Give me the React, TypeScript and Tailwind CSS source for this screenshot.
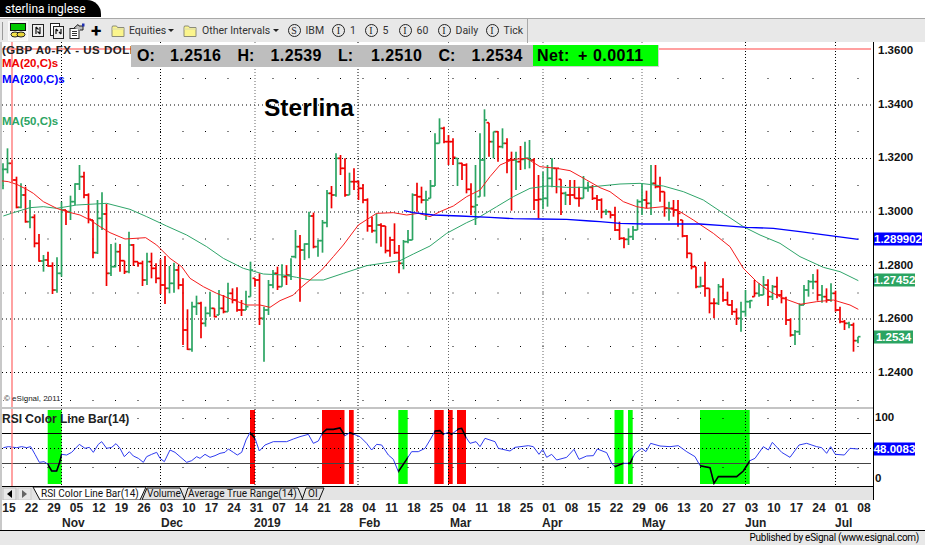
import type { ReactNode } from 'react';

// [green, high, low, close] read off the chart, in three stretches with their own y base
type Raw = [number, number, number, number];

const SEG_A: Raw[] = [
  [1,100,178,118],[1,55,130,100],[0,90,160,150],[0,140,235,232],[1,160,235,195],[0,170,278,275],[1,210,295,262],[0,253,352,340],
  [0,312,395,393],[1,375,425,390],[0,365,410,408],[0,397,492,480],[1,382,488,430],[1,215,440,240],[0,240,285,245],[1,197,270,215],
  [1,160,225,162],[1,105,180,140],[0,125,205,195],[0,190,280,268],[0,270,385,368],[1,210,372,265],[1,187,300,252],[0,222,468,430],
  [1,342,438,410],[1,338,412,365],[0,342,425,392],[0,392,432,425],[1,305,430,345],[0,342,408,395],[0,395,410,400],[0,392,468,450],
  [1,368,465,395],[0,368,445,415],[0,400,460,445],[0,388,492,465],[0,378,522,475],[1,408,490,460],[1,398,488,420],[0,408,478,465],
  [0,445,645,600],[0,538,660,658],[1,515,665,530],[1,497,555,520],[0,515,625,580],[1,530,590,550],[1,485,560,535],[0,535,562,560],
  [1,480,555,535],[0,495,550,545],[1,458,545,490],[0,475,520,510],[0,472,545,540],[0,510,558,540],[1,482,540,530],[1,395,500,420],
  [0,445,470,450],[0,430,585,565],[1,530,695,540],[1,450,555,465],[1,420,475,430],[0,410,480,470],[1,403,470,440],[0,405,465,435],
  [1,385,450,380],[1,300,385,350],[0,315,515,360],[1,340,390,342],[1,245,385,258],
];
const SEG_B: Raw[] = [
  [0,338,445,440],[1,420,470,422],[1,360,458,368],[1,270,382,280],[0,258,325,285],[1,160,290,175],[0,165,225,205],[0,175,290,285],
  [1,218,285,245],[0,205,270,245],[0,242,300,265],[0,252,310,300],[0,295,395,378],[0,350,398,392],[1,340,430,375],[0,370,440,378],
  [0,378,460,452],[0,410,470,420],[0,370,462,458],[0,435,520,490],[1,420,508,425],[1,390,430,420],[1,280,420,285],[0,248,335,290],
  [0,260,310,300],[1,272,360,300],[1,240,295,258],[1,100,258,130],[1,55,130,85],[0,80,130,125],[0,105,195,125],[0,115,195,172],
  [1,175,258,190],[0,188,240,195],[0,190,280,268],[0,250,345,320],[1,195,375,315],[1,100,290,180],[1,28,290,60],[0,68,170,125],
  [1,95,175,95],[0,95,185,140],[1,85,145,130],[0,115,220,180],[0,155,332,180],[1,155,270,185],[0,138,210,178],[1,125,208,175],
  [1,120,205,180],[0,175,330,300],[0,225,355,298],[1,215,328,295],[1,195,320,235],[1,175,262,205],[0,205,280,205],[0,238,345,280],
  [1,275,315,285],[0,240,315,285],[0,240,295,295],[0,260,320,295],[1,228,295,265],[1,245,275,262],[0,255,300,295],[0,285,330,300],
];
const SEG_C: Raw[] = [
  [0,145,205,185],[1,178,195,185],[0,185,205,195],[0,170,243,240],[0,215,270,265],[0,262,295,268],[1,235,285,260],[1,228,270,240],
  [1,148,240,155],[1,100,195,150],[0,122,175,160],[1,45,195,100],[0,45,115,110],[0,80,155,125],[0,125,200,175],[1,155,212,175],
  [0,150,200,180],[0,150,230,190],[0,210,262,258],[0,255,325,310],[0,310,358,350],[0,350,415,410],[1,380,412,408],[0,335,440,415],
  [0,415,490,460],[0,445,505,460],[1,402,465,410],[0,385,455,450],[0,425,465,465],[0,450,495,485],[0,475,525,505],[1,455,545,485],
  [1,420,500,455],[1,450,475,452],[0,390,440,430],[1,400,440,435],[1,378,435,405],[0,388,468,440],[1,405,450,410],[0,380,445,435],
  [0,420,460,445],[0,440,525,510],[0,505,560,555],[1,540,585,545],[1,460,555,465],[1,405,465,420],[1,390,440,395],[1,372,418,395],
  [0,358,452,435],[1,405,458,440],[0,415,458,450],[1,400,455,430],[0,422,485,480],[0,470,520,515],[0,510,540,520],[1,515,535,525],
  [0,518,605,572],[1,560,580,560],
];

const toBars = (seg: Raw[], base: number) =>
  seg.map(([green, hi, lo, close]) => ({ green, hi: base + hi / 3, lo: base + lo / 3, close: base + close / 3 }));

const BARS = [...toBars(SEG_A, 130), ...toBars(SEG_B, 100), ...toBars(SEG_C, 150)];

type Pt = [number, number];
const pts = (list: Pt[], ox: number, oy: number) => list.map(([a, b]) => ox + a / 3 + ',' + (oy + b / 3)).join(' ');

const MA20 = [
  pts([[0,152],[25,155],[50,163],[80,178],[100,190],[130,215],[170,235],[200,245],[240,255],[270,270],[300,290],[330,308],[375,327],[437,323],[470,345],[510,385],[545,410],[570,445],[610,470],[650,490],[700,510],[740,525],[780,525],[810,532],[840,512],[880,495],[900,475],[930,450]], 0, 130),
  pts([[65,510],[100,470],[130,435],[175,375],[230,340],[280,338],[320,345],[355,340],[390,350],[420,335],[460,318],[500,290],[540,270],[570,230],[600,195],[640,178],[680,175],[720,200],[770,205],[810,212],[860,240]], 300, 100),
  pts([[0,113],[30,125],[70,155],[110,170],[140,175],[190,170],[240,185],[280,210],[340,250],[390,290],[430,355],[470,395],[510,425],[550,445],[600,463],[650,455],[700,450],[750,465],[775,478]], 600, 150),
].join(' ');

const MA50 = [
  pts([[10,258],[40,248],[90,233],[130,230],[170,235],[230,225],[320,220],[390,238],[440,260],[500,288],[560,315],[620,350],[670,385],[730,415],[790,432],[850,435],[890,442],[930,450]], 0, 130),
  pts([[70,540],[130,520],[200,497],[300,482],[340,462],[390,438],[440,400],[500,368],[540,350],[590,320],[640,290],[690,265],[740,258],[800,262],[860,262],[900,258]], 300, 100),
  pts([[0,108],[60,102],[120,100],[190,108],[250,125],[310,150],[370,190],[430,230],[480,255],[540,280],[600,320],[670,352],[720,365],[775,392]], 600, 150),
].join(' ');

const MA200 = [
  pts([[312,332],[340,338],[400,345],[480,348],[570,352],[640,356],[720,357],[800,358],[870,363]], 300, 100),
  pts([[0,215],[60,220],[130,222],[220,222],[300,222],[370,227],[440,232],[520,235],[600,245],[690,257],[775,268]], 600, 150),
].join(' ');

const RSI = [
  pts([[10,158],[25,155],[50,158],[65,155],[80,158],[92,155],[105,178],[118,202],[132,200],[143,207],[155,228],[170,228],[178,205],[185,178],[200,180],[215,172],[238,148],[255,160],[268,157],[280,172],[295,148],[305,140],[320,160],[335,157],[348,146],[360,160],[373,185],[388,170],[400,183],[415,190],[430,202],[440,185],[455,178],[470,172],[480,190],[493,200],[510,165],[525,172],[540,185],[560,202],[575,197],[590,185],[600,190],[615,178],[630,187],[645,182],[660,175],[675,172],[685,162],[700,172],[712,180],[725,172],[738,135],[750,113],[765,130],[778,168],[795,150],[820,140],[860,140],[880,132],[900,125],[925,118],[940,145],[955,138],[968,113],[980,103],[1000,103],[1020,99],[1035,122],[1050,113],[1062,118],[1080,125],[1100,145],[1115,165],[1130,148],[1145,150],[1165,180]], 0, 395),
  pts([[10,178],[25,215],[50,178],[65,155],[85,155],[105,145],[120,120],[135,93],[150,92],[160,103],[175,97],[185,103],[205,87],[215,85],[230,115],[240,130],[258,125],[270,140],[285,115],[315,125],[325,145],[360,153],[375,142],[415,137],[430,140],[447,163],[458,148],[470,172],[485,163],[500,180],[530,172],[552,148],[567,178],[590,168],[610,167],[622,147],[650,158],[665,190]], 390, 400),
  pts([[45,215],[70,205],[90,205],[105,175],[125,160],[138,170],[152,145],[180,153],[210,155],[235,152],[260,170],[285,185],[300,212],[330,218],[342,265],[355,245],[410,245],[430,228],[450,197],[465,190],[490,155],[505,165],[517,142],[545,172],[570,187],[597,150],[620,145],[650,155],[665,158],[680,175],[692,155],[706,178],[733,180],[750,160],[775,162]], 600, 395),
].join(' ');

const BANDS: { x1: number; x2: number; color: string }[] = [
  { x1: 47.7, x2: 61.7, color: '#00ff00' },
  { x1: 250, x2: 255, color: '#ff0000' },
  { x1: 322, x2: 344.5, color: '#ff0000' },
  { x1: 349, x2: 353.7, color: '#ff0000' },
  { x1: 398.3, x2: 407.7, color: '#00ff00' },
  { x1: 434.3, x2: 443.7, color: '#ff0000' },
  { x1: 448, x2: 452.7, color: '#ff0000' },
  { x1: 457, x2: 466, color: '#ff0000' },
  { x1: 614.5, x2: 623.5, color: '#00ff00' },
  { x1: 628, x2: 632.7, color: '#00ff00' },
  { x1: 700, x2: 749.7, color: '#00ff00' },
];

const MONTH_X = [61.5, 160.5, 255, 358, 448.5, 543, 642, 745.5, 835.5];
const PRICE_Y = [105, 158.5, 212, 265.5, 319, 372.5];
const MINOR_Y = [78.5, 131.5, 185.5, 239, 293, 346.5, 400.5];

const DATES = ['15','22','29','05','12','19','26','03','10','17','24','31','07','14','21','28','04','11','18','25','04','11','18','25','01','08','15','22','29','06','13','20','27','03','10','17','24','01','08'];

const GREEN = '#2ba462';

function PriceChart() {
  return (
    <svg width={871} height={365} viewBox="2 42 871 365" className="block">
      {PRICE_Y.map((y) => (
        <line key={y} x1={2} x2={871} y1={y} y2={y} stroke="#000" strokeWidth={1} strokeDasharray="1 3" />
      ))}
      {MINOR_Y.map((y) => (
        <line key={y} x1={3} x2={871} y1={y} y2={y} stroke="#000" strokeWidth={1} strokeDasharray="1 21.5" strokeDashoffset={-22} />
      ))}
      {MONTH_X.map((x, i) => (
        <line key={x} x1={x} x2={x} y1={42} y2={407} stroke={i === 2 || i === 4 || i === 5 || i === 6 ? '#666' : '#000'} strokeWidth={1} strokeDasharray="1 2" />
      ))}
      <line x1={2} x2={871} y1={49} y2={49} stroke="#ff8080" strokeWidth={1.5} />
      {BARS.map((b, i) => {
        const x = 3 + i * 4.5;
        const color = b.green ? GREEN : '#f00000';
        const open = i > 0 ? BARS[i - 1].close : b.close;
        const openY = Math.min(b.lo, Math.max(b.hi, open));
        return (
          <g key={i} stroke={color} strokeWidth={1.7} fill="none">
            <line x1={x} x2={x} y1={b.hi} y2={b.lo} />
            <line x1={x} x2={x + 2.5} y1={b.close} y2={b.close} />
            <line x1={x - 2.5} x2={x} y1={openY} y2={openY} />
          </g>
        );
      })}
      <polyline points={MA50} fill="none" stroke="#2fa56a" strokeWidth={1} />
      <polyline points={MA20} fill="none" stroke="#f51c1c" strokeWidth={1} />
      <polyline points={MA200} fill="none" stroke="#0000ff" strokeWidth={1.3} />
      <line x1={12} x2={12} y1={42} y2={407} stroke="#ff7070" strokeWidth={1.3} />
    </svg>
  );
}

function RsiChart() {
  return (
    <svg width={871} height={77} viewBox="2 409 871 77" className="block">
      <defs>
        <clipPath id="rsi-bands">
          {BANDS.map((b) => (
            <rect key={b.x1} x={b.x1} y={409} width={b.x2 - b.x1} height={77} />
          ))}
        </clipPath>
      </defs>
      {BANDS.map((b) => (
        <rect key={b.x1} x={b.x1} y={410} width={b.x2 - b.x1} height={74} fill={b.color} />
      ))}
      {MONTH_X.map((x) => (
        <line key={x} x1={x} x2={x} y1={409} y2={486} stroke="#000" strokeWidth={1} strokeDasharray="1 2" />
      ))}
      {[418.5, 467.5].map((y) => (
        <line key={y} x1={3} x2={871} y1={y} y2={y} stroke="#000" strokeWidth={1} strokeDasharray="1 21.5" strokeDashoffset={-22} />
      ))}
      <line x1={2} x2={871} y1={448.5} y2={448.5} stroke="#000" strokeWidth={1} strokeDasharray="1 3" />
      <line x1={2} x2={871} y1={433.5} y2={433.5} stroke="#000" strokeWidth={1} />
      <line x1={2} x2={871} y1={463.5} y2={463.5} stroke="#444" strokeWidth={1.2} />
      <polyline points={RSI} fill="none" stroke="#2f3cf0" strokeWidth={1} />
      <polyline points={RSI} fill="none" stroke="#000" strokeWidth={1.6} clipPath="url(#rsi-bands)" />
      <line x1={12} x2={12} y1={409} y2={486} stroke="#ff7070" strokeWidth={1.3} />
    </svg>
  );
}

function Circled({ letter }: { letter: string }) {
  return (
    <span className="flex h-[13px] w-[13px] shrink-0 items-center justify-center rounded-full border border-[#222] font-['Liberation_Serif',serif] text-[10px] leading-none text-[#222]">
      {letter}
    </span>
  );
}

// one "circled letter + caption" button, fixed width so the row lines up whatever the font does
function Interval({ letter, label, className }: { letter: string; label: string; className: string }) {
  return (
    <span className={'flex items-center gap-[5px] whitespace-nowrap ' + className}>
      <Circled letter={letter} />
      {label}
    </span>
  );
}

function Folder() {
  return (
    <svg width={14} height={14} viewBox="0 0 14 14" className="shrink-0">
      <path d="M1 3.5 L1.5 2 H5.5 L6.5 3.5 H13 V12.5 H1 Z" fill="#fbf58c" stroke="#8c8c78" strokeWidth={1} />
      <line x1={1} x2={13} y1={5} y2={5} stroke="#d8d8b0" />
    </svg>
  );
}

function Arrow() {
  return <span className="block h-0 w-0 border-x-[3px] border-t-[3px] border-x-transparent border-t-[#222]" />;
}

function ChainIcon() {
  return (
    <svg width={18} height={18} viewBox="0 0 18 18">
      <rect x={1.5} y={1.5} width={15} height={7} fill="#00c800" stroke="#111" />
      <ellipse cx={6} cy={12.5} rx={4} ry={2.5} fill="#f3e24a" stroke="#222" />
      <ellipse cx={12} cy={12.5} rx={4} ry={2.5} fill="#e9d63a" stroke="#222" />
    </svg>
  );
}

function SwapIcon({ double }: { double?: boolean }) {
  return (
    <svg width={14} height={16} viewBox="0 0 14 16">
      {double && <rect x={0.5} y={0.5} width={9} height={12} fill="#fff" stroke="#222" />}
      <rect x={double ? 3.5 : 1.5} y={double ? 3.5 : 1.5} width={double ? 10 : 11} height={12} fill="#eee" stroke="#222" />
      <path d={double ? 'M6 6 L6 11 M6 6 L8 8 M11 11 L11 6 M11 11 L9 9' : 'M5 4 L5 11 M5 4 L7.5 6.5 M9 11 L9 4 M9 11 L6.5 8.5'} stroke="#111" strokeWidth={1.2} fill="none" />
    </svg>
  );
}

function ReportIcon() {
  return (
    <svg width={16} height={16} viewBox="0 0 16 16">
      <rect x={1} y={5.5} width={9} height={10} fill="#fff" stroke="#222" />
      <path d="M3 8.5 H8 M3 10.5 H8 M3 12.5 H8" stroke="#333" />
      <path d="M5 5 L9 1.5 L10 3 H14 V7 H11" fill="#bbb" stroke="#222" />
      <rect x={13} y={0.5} width={2.5} height={3} fill="#2030b0" />
    </svg>
  );
}

function Toolbar() {
  return (
    <div className="flex h-[24px] items-center border-t border-[#a8a8a8] bg-[#e8e8e8] font-['Roboto',sans-serif] text-[10.5px] text-[#333]">
      <span className="ml-[2px] h-[18px] w-[1px] bg-[#999]" />
      <span className="ml-[5px] flex h-[20px] w-[20px] items-center justify-center border border-[#fafafa] bg-[#f4f4f4]">
        <ChainIcon />
      </span>
      <span className="ml-[3px] flex w-[14px] justify-center"><SwapIcon /></span>
      <span className="ml-[5px] flex w-[14px] justify-center"><SwapIcon double /></span>
      <span className="ml-[5px] flex w-[16px] justify-center"><ReportIcon /></span>
      <span className="ml-[6px] w-[10px] text-[19px] leading-none font-bold text-black">+</span>
      <span className="ml-[10px]"><Folder /></span>
      <span className="ml-[4px] w-[39px] whitespace-nowrap">Equities</span>
      <span className="mr-[9px]"><Arrow /></span>
      <Folder />
      <span className="ml-[5px] w-[71px] whitespace-nowrap">Other Intervals</span>
      <Arrow />
      <Interval letter="S" label="IBM" className="ml-[8.5px] w-[44.5px]" />
      <Interval letter="I" label="1" className="w-[32.5px]" />
      <Interval letter="I" label="5" className="w-[34px]" />
      <Interval letter="I" label="60" className="w-[39px]" />
      <Interval letter="I" label="Daily" className="w-[48px]" />
      <Interval letter="I" label="Tick" className="w-[41.5px]" />
      <span className="h-[24px] w-[1px] bg-[#a8a8a8]" />
    </div>
  );
}

function Quote({ label, value }: { label: string; value: string }) {
  return (
    <span className="flex">
      <span className="w-[33px]">{label}</span>
      <span className="w-[67.5px] tracking-[0.4px]">{value}</span>
    </span>
  );
}

function Legend({ className, children }: { className: string; children: ReactNode }) {
  return <div className={'absolute left-0 text-[11.5px] leading-[14px] font-bold ' + className}>{children}</div>;
}

function AxisTick({ y, left = 4, children }: { y: number; left?: number; children: ReactNode }) {
  return (
    <span className="absolute -translate-y-1/2 text-[11.5px] leading-none font-bold text-[#111]" style={{ top: y, left }}>
      {children}
    </span>
  );
}

function AxisBadge({ y, width, color, children }: { y: number; width: number; color: string; children: ReactNode }) {
  return (
    <span
      className="absolute left-0 flex h-[13px] -translate-y-1/2 items-center justify-center text-[11.5px] leading-none font-bold text-white"
      style={{ top: y, width, backgroundColor: color }}
    >
      {children}
    </span>
  );
}

function TabStrip() {
  return (
    <div className="relative flex h-[13px] items-center bg-[#e4e4e4] font-['Roboto',sans-serif] text-[10px] leading-none whitespace-nowrap text-[#111]">
      <svg width={330} height={13} viewBox="2 487 330 13" className="absolute top-0 left-0">
        <rect x={3} y={488} width={13} height={12} fill="#e8e8e8" stroke="#bbb" />
        <path d="M12 490 L7 494 L12 498 Z" fill="#000" />
        <rect x={18} y={488} width={13} height={12} fill="#e8e8e8" stroke="#ccc" />
        <path d="M22 490 L27 494 L22 498 Z" fill="#666" />
        <path d="M33 487 L40 500 H140 L146 487 Z" fill="#fff" stroke="#111" />
        <path d="M142 500 L147 488 H180 L185 500 Z" fill="#e4e4e4" stroke="#111" />
        <path d="M184 500 L188 488 H298 L303 500 Z" fill="#e4e4e4" stroke="#111" />
        <path d="M302 500 L306 488 H324 L319 500 Z" fill="#e4e4e4" stroke="#111" />
      </svg>
      <span className="relative ml-[39px] w-[106px]">RSI Color Line Bar(14)</span>
      <span className="relative w-[41px]">Volume</span>
      <span className="relative w-[120px] tracking-[0.1px]">Average True Range(14)</span>
      <span className="relative">OI</span>
    </div>
  );
}

export default function App() {
  return (
    <div className="flex h-[545px] w-[925px] flex-col overflow-hidden bg-white font-['Liberation_Sans',Arial,sans-serif] text-black">
      <div className="h-[18px]">
        <div className="flex h-[17px] w-[101px] items-center rounded-tr-[14px] bg-black pl-[5px] font-['Roboto',sans-serif] text-[12px] leading-none text-white">
          sterlina inglese
        </div>
      </div>
      <Toolbar />

      <div className="flex h-[488px]">
        <div className="w-[873px] border-l-2 border-[#c8c8c8]">
          <div className="relative h-[365px]">
            <PriceChart />
            <Legend className="top-[1px] tracking-[0.5px] text-[#222]">(GBP A0-FX - US DOLL</Legend>
            <Legend className="top-[14px] text-[#f00000]">MA(20,C)s</Legend>
            <Legend className="top-[30px] text-[#0000ff]">MA(200,C)s</Legend>
            <Legend className="top-[72px] text-[#2ba462]">MA(50,C)s</Legend>
            <div className="absolute top-[3px] left-[129px] flex h-[22px] text-[16px] leading-[21px] font-bold">
              <div className="flex w-[402px] bg-[#bebebe] pl-[6px]">
                <Quote label="O:" value="1.2516" />
                <Quote label="H:" value="1.2539" />
                <Quote label="L:" value="1.2510" />
                <Quote label="C:" value="1.2534" />
              </div>
              <div className="flex w-[126px] border-r border-b border-[#cfcfcf] bg-[#00ff00] pl-[4px] tracking-[0.4px] whitespace-nowrap">
                <span className="w-[41px]">Net:</span>
                <span className="w-[15px]">+</span>
                <span>0.0011</span>
              </div>
            </div>
            <div className="absolute top-[54px] left-[262px] text-[24.5px] leading-none font-bold">Sterlina</div>
            <div className="absolute top-[353px] left-[2px] text-[8px] leading-none text-[#222]">© eSignal, 2011</div>
          </div>
          <div className="h-[2px] bg-[#c4c4c4]" />
          <div className="relative h-[77px]">
            <RsiChart />
            <Legend className="top-[3px] text-[12px] text-[#222]">RSI Color Line Bar(14)</Legend>
          </div>
          <div className="h-[1px] bg-black" />
          <TabStrip />
          <div className="-ml-[4.25px] grid grid-cols-[repeat(39,22.5px)] pt-[1px] text-center text-[12px] leading-[15px] font-bold text-[#222]">
            {DATES.map((d, i) => (
              <span key={i}>{d}</span>
            ))}
          </div>
          <div className="flex text-[12px] leading-[14px] font-bold text-[#222]">
            <span className="ml-[60px] w-[99px]">Nov</span>
            <span className="w-[93px]">Dec</span>
            <span className="w-[105px]">2019</span>
            <span className="w-[91px]">Feb</span>
            <span className="w-[92px]">Mar</span>
            <span className="w-[100px]">Apr</span>
            <span className="w-[103px]">May</span>
            <span className="w-[90px]">Jun</span>
            <span>Jul</span>
          </div>
        </div>

        <div className="relative flex-1 border-l border-black">
          {[1.36, 1.34, 1.32, 1.3, 1.28, 1.26, 1.24].map((p) => (
            <AxisTick key={p} y={212 - 42 - (p - 1.3) * 2680}>
              {p.toFixed(4)}
            </AxisTick>
          ))}
          <AxisBadge y={197} width={48} color="#0000ff">1.289902</AxisBadge>
          <AxisBadge y={238} width={41} color={GREEN}>1.27452</AxisBadge>
          <AxisBadge y={295} width={39} color={GREEN}>1.2534</AxisBadge>
          <AxisTick y={376} left={1}>100</AxisTick>
          <AxisTick y={437} left={1}>0</AxisTick>
          <AxisBadge y={407} width={41} color="#0000ff">48.0083</AxisBadge>
          <div className="absolute top-[458px] bottom-0 -left-px w-px bg-white" />
        </div>
      </div>

      <div className="flex h-[15px] items-center justify-end border-t border-black bg-[#e8e8e8] pr-[6px] font-['Roboto',sans-serif] text-[10px] leading-none tracking-[-0.28px]">
        Published by eSignal (www.esignal.com)
      </div>
    </div>
  );
}
